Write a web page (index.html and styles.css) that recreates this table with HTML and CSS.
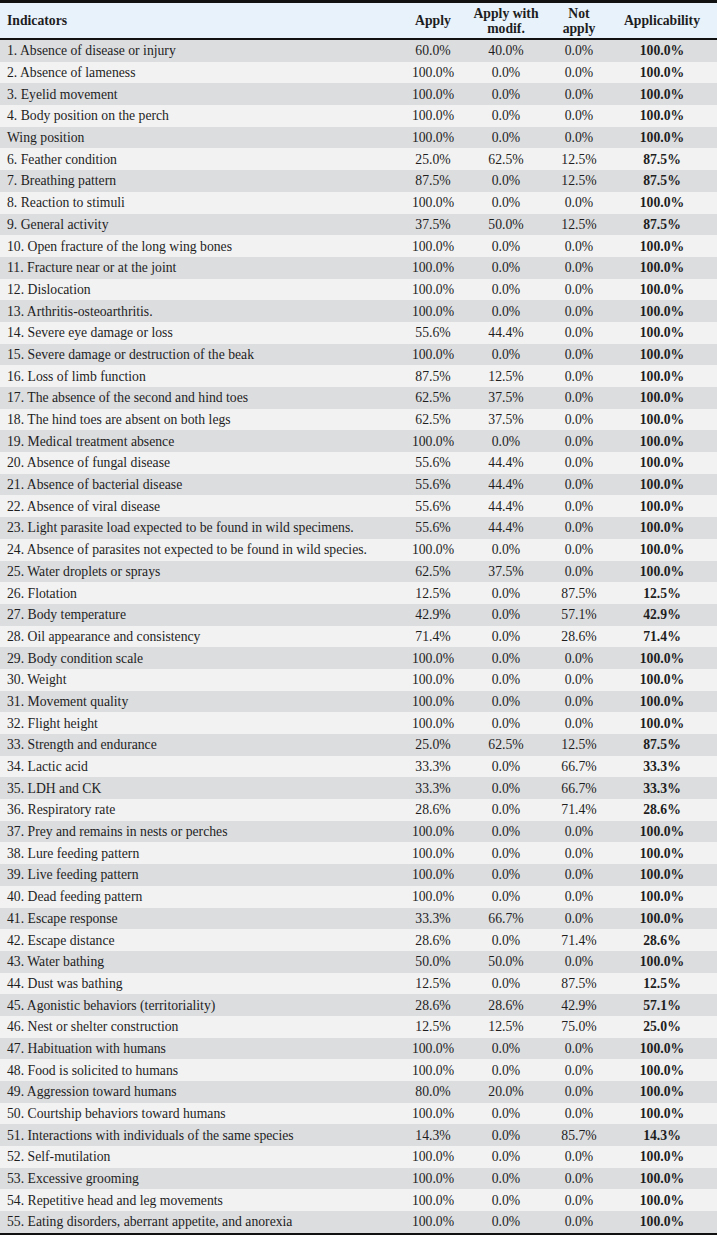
FILE: index.html
```html
<!DOCTYPE html>
<html>
<head>
<meta charset="utf-8">
<link rel="stylesheet" href="styles.css">
</head>
<body>
<table class="tbl">
<colgroup><col class="c1"><col class="c2"><col class="c3"><col class="c4"><col class="c5"></colgroup>
<thead>
<tr><th class="ind">Indicators</th><th>Apply</th><th>Apply with<br>modif.</th><th>Not<br>apply</th><th>Applicability</th></tr>
</thead>
<tbody>
<tr><td>1. Absence of disease or injury</td><td>60.0%</td><td>40.0%</td><td>0.0%</td><td>100.0%</td></tr>
<tr><td>2. Absence of lameness</td><td>100.0%</td><td>0.0%</td><td>0.0%</td><td>100.0%</td></tr>
<tr><td>3. Eyelid movement</td><td>100.0%</td><td>0.0%</td><td>0.0%</td><td>100.0%</td></tr>
<tr><td>4. Body position on the perch</td><td>100.0%</td><td>0.0%</td><td>0.0%</td><td>100.0%</td></tr>
<tr><td>Wing position</td><td>100.0%</td><td>0.0%</td><td>0.0%</td><td>100.0%</td></tr>
<tr><td>6. Feather condition</td><td>25.0%</td><td>62.5%</td><td>12.5%</td><td>87.5%</td></tr>
<tr><td>7. Breathing pattern</td><td>87.5%</td><td>0.0%</td><td>12.5%</td><td>87.5%</td></tr>
<tr><td>8. Reaction to stimuli</td><td>100.0%</td><td>0.0%</td><td>0.0%</td><td>100.0%</td></tr>
<tr><td>9. General activity</td><td>37.5%</td><td>50.0%</td><td>12.5%</td><td>87.5%</td></tr>
<tr><td>10. Open fracture of the long wing bones</td><td>100.0%</td><td>0.0%</td><td>0.0%</td><td>100.0%</td></tr>
<tr><td>11. Fracture near or at the joint</td><td>100.0%</td><td>0.0%</td><td>0.0%</td><td>100.0%</td></tr>
<tr><td>12. Dislocation</td><td>100.0%</td><td>0.0%</td><td>0.0%</td><td>100.0%</td></tr>
<tr><td>13. Arthritis-osteoarthritis.</td><td>100.0%</td><td>0.0%</td><td>0.0%</td><td>100.0%</td></tr>
<tr><td>14. Severe eye damage or loss</td><td>55.6%</td><td>44.4%</td><td>0.0%</td><td>100.0%</td></tr>
<tr><td>15. Severe damage or destruction of the beak</td><td>100.0%</td><td>0.0%</td><td>0.0%</td><td>100.0%</td></tr>
<tr><td>16. Loss of limb function</td><td>87.5%</td><td>12.5%</td><td>0.0%</td><td>100.0%</td></tr>
<tr><td>17. The absence of the second and hind toes</td><td>62.5%</td><td>37.5%</td><td>0.0%</td><td>100.0%</td></tr>
<tr><td>18. The hind toes are absent on both legs</td><td>62.5%</td><td>37.5%</td><td>0.0%</td><td>100.0%</td></tr>
<tr><td>19. Medical treatment absence</td><td>100.0%</td><td>0.0%</td><td>0.0%</td><td>100.0%</td></tr>
<tr><td>20. Absence of fungal disease</td><td>55.6%</td><td>44.4%</td><td>0.0%</td><td>100.0%</td></tr>
<tr><td>21. Absence of bacterial disease</td><td>55.6%</td><td>44.4%</td><td>0.0%</td><td>100.0%</td></tr>
<tr><td>22. Absence of viral disease</td><td>55.6%</td><td>44.4%</td><td>0.0%</td><td>100.0%</td></tr>
<tr><td>23. Light parasite load expected to be found in wild specimens.</td><td>55.6%</td><td>44.4%</td><td>0.0%</td><td>100.0%</td></tr>
<tr><td>24. Absence of parasites not expected to be found in wild species.</td><td>100.0%</td><td>0.0%</td><td>0.0%</td><td>100.0%</td></tr>
<tr><td>25. Water droplets or sprays</td><td>62.5%</td><td>37.5%</td><td>0.0%</td><td>100.0%</td></tr>
<tr><td>26. Flotation</td><td>12.5%</td><td>0.0%</td><td>87.5%</td><td>12.5%</td></tr>
<tr><td>27. Body temperature</td><td>42.9%</td><td>0.0%</td><td>57.1%</td><td>42.9%</td></tr>
<tr><td>28. Oil appearance and consistency</td><td>71.4%</td><td>0.0%</td><td>28.6%</td><td>71.4%</td></tr>
<tr><td>29. Body condition scale</td><td>100.0%</td><td>0.0%</td><td>0.0%</td><td>100.0%</td></tr>
<tr><td>30. Weight</td><td>100.0%</td><td>0.0%</td><td>0.0%</td><td>100.0%</td></tr>
<tr><td>31. Movement quality</td><td>100.0%</td><td>0.0%</td><td>0.0%</td><td>100.0%</td></tr>
<tr><td>32. Flight height</td><td>100.0%</td><td>0.0%</td><td>0.0%</td><td>100.0%</td></tr>
<tr><td>33. Strength and endurance</td><td>25.0%</td><td>62.5%</td><td>12.5%</td><td>87.5%</td></tr>
<tr><td>34. Lactic acid</td><td>33.3%</td><td>0.0%</td><td>66.7%</td><td>33.3%</td></tr>
<tr><td>35. LDH and CK</td><td>33.3%</td><td>0.0%</td><td>66.7%</td><td>33.3%</td></tr>
<tr><td>36. Respiratory rate</td><td>28.6%</td><td>0.0%</td><td>71.4%</td><td>28.6%</td></tr>
<tr><td>37. Prey and remains in nests or perches</td><td>100.0%</td><td>0.0%</td><td>0.0%</td><td>100.0%</td></tr>
<tr><td>38. Lure feeding pattern</td><td>100.0%</td><td>0.0%</td><td>0.0%</td><td>100.0%</td></tr>
<tr><td>39. Live feeding pattern</td><td>100.0%</td><td>0.0%</td><td>0.0%</td><td>100.0%</td></tr>
<tr><td>40. Dead feeding pattern</td><td>100.0%</td><td>0.0%</td><td>0.0%</td><td>100.0%</td></tr>
<tr><td>41. Escape response</td><td>33.3%</td><td>66.7%</td><td>0.0%</td><td>100.0%</td></tr>
<tr><td>42. Escape distance</td><td>28.6%</td><td>0.0%</td><td>71.4%</td><td>28.6%</td></tr>
<tr><td>43. Water bathing</td><td>50.0%</td><td>50.0%</td><td>0.0%</td><td>100.0%</td></tr>
<tr><td>44. Dust was bathing</td><td>12.5%</td><td>0.0%</td><td>87.5%</td><td>12.5%</td></tr>
<tr><td>45. Agonistic behaviors (territoriality)</td><td>28.6%</td><td>28.6%</td><td>42.9%</td><td>57.1%</td></tr>
<tr><td>46. Nest or shelter construction</td><td>12.5%</td><td>12.5%</td><td>75.0%</td><td>25.0%</td></tr>
<tr><td>47. Habituation with humans</td><td>100.0%</td><td>0.0%</td><td>0.0%</td><td>100.0%</td></tr>
<tr><td>48. Food is solicited to humans</td><td>100.0%</td><td>0.0%</td><td>0.0%</td><td>100.0%</td></tr>
<tr><td>49. Aggression toward humans</td><td>80.0%</td><td>20.0%</td><td>0.0%</td><td>100.0%</td></tr>
<tr><td>50. Courtship behaviors toward humans</td><td>100.0%</td><td>0.0%</td><td>0.0%</td><td>100.0%</td></tr>
<tr><td>51. Interactions with individuals of the same species</td><td>14.3%</td><td>0.0%</td><td>85.7%</td><td>14.3%</td></tr>
<tr><td>52. Self-mutilation</td><td>100.0%</td><td>0.0%</td><td>0.0%</td><td>100.0%</td></tr>
<tr><td>53. Excessive grooming</td><td>100.0%</td><td>0.0%</td><td>0.0%</td><td>100.0%</td></tr>
<tr><td>54. Repetitive head and leg movements</td><td>100.0%</td><td>0.0%</td><td>0.0%</td><td>100.0%</td></tr>
<tr><td>55. Eating disorders, aberrant appetite, and anorexia</td><td>100.0%</td><td>0.0%</td><td>0.0%</td><td>100.0%</td></tr>
</tbody>
</table>
</body>
</html>
```
FILE: styles.css
```css
html, body {
  margin: 0;
  padding: 0;
  background: #ffffff;
}
.tbl {
  width: 717px;
  border-collapse: collapse;
  table-layout: fixed;
  font-family: "Liberation Serif", "Times New Roman", serif;
  font-size: 13.7px;
  color: #1e1e1e;
  border-top: 3px solid #111;
  border-bottom: 3px solid #111;
}
.c1 { width: 405px; }
.c2 { width: 56px; }
.c3 { width: 90px; }
.c4 { width: 56px; }
.c5 { width: 110px; }
.tbl thead tr {
  background: #e8f2fb;
  border-bottom: 2px solid #111;
}
.tbl th {
  height: 35px;
  padding: 0;
  font-weight: bold;
  text-align: center;
  line-height: 15px;
  vertical-align: middle;
}
.tbl th.ind {
  text-align: left;
  padding-left: 7px;
}
.tbl td {
  height: 21.7px;
  padding: 0;
  line-height: 15px;
  text-align: center;
  vertical-align: middle;
  white-space: nowrap;
}
.tbl td:first-child {
  text-align: left;
  padding-left: 7px;
}
.tbl td:last-child {
  font-weight: bold;
}
.tbl tbody tr:nth-child(odd) { background: #dcdddf; }
.tbl tbody tr:nth-child(even) { background: #f2f2f2; }
```
